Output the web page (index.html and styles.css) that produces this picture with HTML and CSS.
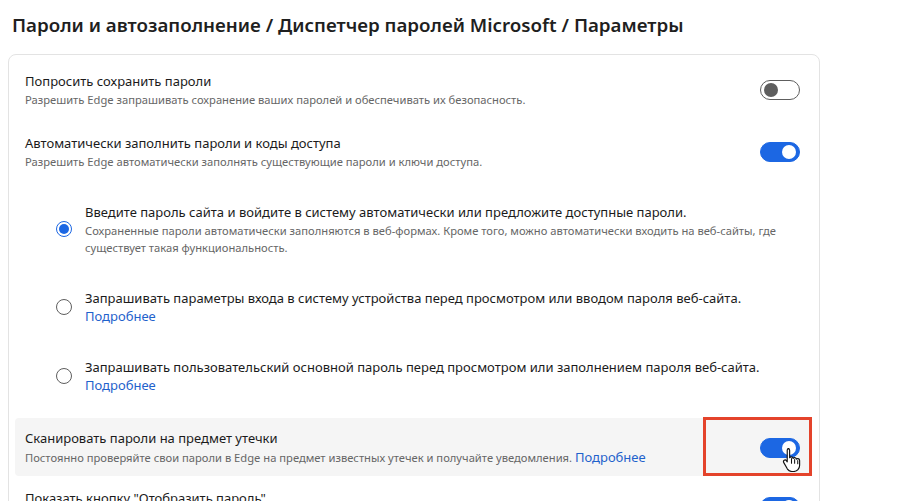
FILE: index.html
```html
<!DOCTYPE html>
<html lang="ru">
<head>
<meta charset="utf-8">
<link rel="stylesheet" href="styles.css">
</head>
<body>
<h1 class="page-title">Пароли и автозаполнение / Диспетчер паролей Microsoft / Параметры</h1>
<div class="card">
  <div class="row">
    <div class="row-text">
      <div class="row-title">Попросить сохранить пароли</div>
      <div class="row-desc">Разрешить Edge запрашивать сохранение ваших паролей и обеспечивать их безопасность.</div>
    </div>
    <span class="toggle"></span>
  </div>
  <div class="row">
    <div class="row-text">
      <div class="row-title">Автоматически заполнить пароли и коды доступа</div>
      <div class="row-desc">Разрешить Edge автоматически заполнять существующие пароли и ключи доступа.</div>
    </div>
    <span class="toggle on"></span>
  </div>
  <div class="options">
    <div class="option">
      <span class="radio checked"></span>
      <div class="option-text">
        <div class="row-title">Введите пароль сайта и войдите в систему автоматически или предложите доступные пароли.</div>
        <div class="option-desc">Сохраненные пароли автоматически заполняются в веб-формах. Кроме того, можно автоматически входить на веб-сайты, где существует такая функциональность.</div>
      </div>
    </div>
    <div class="option">
      <span class="radio"></span>
      <div class="option-text">
        <div class="row-title">Запрашивать параметры входа в систему устройства перед просмотром или вводом пароля веб-сайта.</div>
        <a class="link link-line">Подробнее</a>
      </div>
    </div>
    <div class="option">
      <span class="radio"></span>
      <div class="option-text">
        <div class="row-title">Запрашивать пользовательский основной пароль перед просмотром или заполнением пароля веб-сайта.</div>
        <a class="link link-line">Подробнее</a>
      </div>
    </div>
  </div>
  <div class="row row-hover">
    <div class="row-text">
      <div class="row-title">Сканировать пароли на предмет утечки</div>
      <div class="row-desc">Постоянно проверяйте свои пароли в Edge на предмет известных утечек и получайте уведомления. <a class="link">Подробнее</a></div>
    </div>
    <span class="toggle on"></span>
    <span class="highlight-box"></span>
    <svg class="cursor" width="19" height="25" viewBox="0 0 18 24">
      <path d="M5.5 1.5c1 0 1.7.7 1.7 1.6v7.2c.4-.6 1.1-.9 1.8-.8.9.1 1.4.7 1.5 1.4.4-.5 1-.8 1.7-.7.8.1 1.4.7 1.5 1.5.4-.4 1-.6 1.6-.5.9.2 1.5.9 1.5 1.8v4.6c0 3.3-2.4 5.9-5.6 5.9H9.3c-1.8 0-3.2-.9-4.2-2.3L1.6 15c-.5-.8-.3-1.7.4-2.2.7-.5 1.6-.3 2.1.3l.8 1.1V3.1c0-.9.6-1.6 1.6-1.6z" fill="#fff" stroke="#111" stroke-width="1.1" stroke-linejoin="round"/>
      <path d="M9 11v4.5M12 12v3.5M15 13v3" stroke="#111" stroke-width="1" fill="none" stroke-linecap="round"/>
    </svg>
  </div>
  <div class="row">
    <div class="row-text">
      <div class="row-title">Показать кнопку "Отобразить пароль"</div>
      <div class="row-desc">Отображение кнопки для просмотра введенного пароля.</div>
    </div>
    <span class="toggle on"></span>
  </div>
</div>
</body>
</html>
```
FILE: styles.css
```css
* { box-sizing: border-box; }
html, body { margin: 0; padding: 0; background: #ffffff; }
body {
  font-family: "Noto Sans", "Open Sans", "Liberation Sans", sans-serif;
  color: #1b1b1b;
  overflow: hidden;
  height: 501px;
}
.page-title {
  margin: 0;
  padding: 12px 0 0 12px;
  height: 54px;
  font-size: 18.75px;
  line-height: 26px;
  font-weight: 600;
  color: #1f1f1f;
}
.card {
  margin-left: 8px;
  width: 812px;
  border: 1px solid #e3e3e3;
  border-radius: 8px;
  padding-top: 4px;
}
.row {
  position: relative;
  display: flex;
  align-items: center;
  margin: 0 7px 0 6px;
  padding: 12px 12px 12px 10px;
  border-radius: 4px;
}
.row-text { flex: 1; min-width: 0; }
.row-title {
  font-size: 13px;
  line-height: 20px;
  color: #1b1b1b;
}
.row-desc {
  font-size: 11.2px;
  line-height: 18px;
  color: #666666;
}
.row-hover {
  background: #f5f5f5;
  margin-top: 8px;
  padding-top: 10px;
  padding-bottom: 9px;
}
.toggle {
  position: relative;
  flex: none;
  width: 40px;
  height: 20px;
  border: 1px solid #5e5e5e;
  border-radius: 10px;
  background: #ffffff;
}
.toggle::after {
  content: "";
  position: absolute;
  left: 3px;
  top: 2px;
  width: 14px;
  height: 14px;
  border-radius: 50%;
  background: #5e5e5e;
}
.toggle.on {
  background: #1c67e3;
  border-color: #1c67e3;
}
.toggle.on::after {
  left: auto;
  right: 3px;
  background: #ffffff;
}
.options {
  margin: 3px 7px 0 6px;
  padding-left: 41px;
}
.option {
  display: flex;
  align-items: center;
  gap: 13px;
  padding: 16px 0;
}
.radio {
  flex: none;
  width: 16px;
  height: 16px;
  border: 1px solid #5e5e5e;
  border-radius: 50%;
  position: relative;
}
.radio.checked { border-color: #1c67e3; }
.radio.checked::after {
  content: "";
  position: absolute;
  left: 2px;
  top: 2px;
  width: 10px;
  height: 10px;
  border-radius: 50%;
  background: #1c67e3;
}
.option-text { flex: 1; min-width: 0; }
.option-desc {
  font-size: 11.2px;
  line-height: 17px;
  color: #666666;
  max-width: 700px;
}
.link {
  color: #1f62cc;
  font-size: 13px;
  cursor: pointer;
}
.link-line {
  display: block;
  line-height: 17px;
}
.highlight-box {
  position: absolute;
  left: 688px;
  top: -1px;
  width: 109px;
  height: 59px;
  border: 3px solid #e4432b;
}
.cursor {
  position: absolute;
  left: 767px;
  top: 29px;
}
```
